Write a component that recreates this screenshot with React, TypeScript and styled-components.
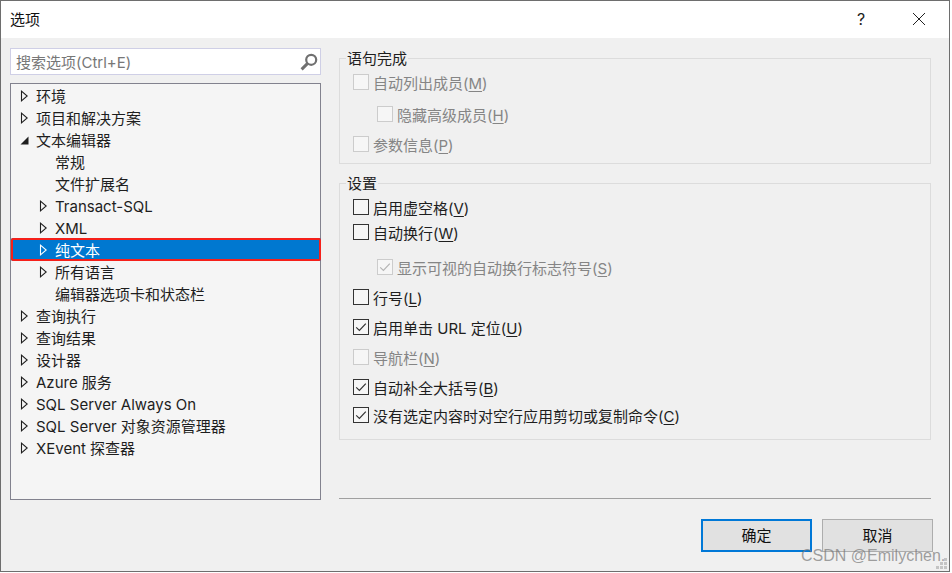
import React from "react";
import styled, { createGlobalStyle } from "styled-components";

const GlobalStyle = createGlobalStyle`
  html, body {
    margin: 0;
    padding: 0;
    background: #fff;
  }
  * {
    box-sizing: border-box;
  }
`;

const Dialog = styled.div`
  width: 950px;
  height: 572px;
  border: 1px solid #6e6e6e;
  background: #f0f0f0;
  display: flex;
  flex-direction: column;
  position: relative;
  overflow: hidden;
  font-family: "Inter", "Noto Sans CJK SC", sans-serif;
  font-size: 15px;
  color: #1e1e1e;
`;

const TitleBar = styled.header`
  height: 37px;
  flex: none;
  background: #fff;
  display: flex;
  align-items: center;
  padding: 0 0 2px 9px;
  color: #111;
`;

const TitleText = styled.span`
  flex: 1;
`;

const TitleButton = styled.div<{ $right: number }>`
  width: 50px;
  margin-right: ${(p) => p.$right}px;
  display: flex;
  align-items: center;
  justify-content: center;
  font-size: 16px;
  color: #222;
`;

const Body = styled.div`
  flex: 1;
  display: flex;
  min-height: 0;
  padding: 10px 17px 0 9px;
  gap: 18px;
`;

const LeftColumn = styled.div`
  width: 311px;
  display: flex;
  flex-direction: column;
  gap: 8px;
`;

const SearchBox = styled.div`
  height: 27px;
  background: #fff;
  border: 1px solid #cfcfe6;
  display: flex;
  align-items: center;
  justify-content: space-between;
  padding: 0 1px 0 5px;
  color: #777;
`;

const Tree = styled.div`
  height: 417px;
  background: #f5f5f5;
  border: 1px solid #82828e;
  padding-top: 1px;
`;

const TreeRow = styled.div<{ $depth: number; $selected?: boolean }>`
  height: ${(p) => (p.$selected ? 23 : 22)}px;
  margin: ${(p) => (p.$selected ? "-1px -1px 0 0" : "0")};
  display: flex;
  align-items: center;
  padding-left: ${(p) => 9 + p.$depth * 19}px;
  padding-top: ${(p) => (p.$selected ? 1 : 0)}px;
  line-height: 22px;
  white-space: nowrap;
  color: ${(p) => (p.$selected ? "#fff" : "#1e1e1e")};
  background: ${(p) => (p.$selected ? "#0078d0" : "transparent")};
  outline: ${(p) => (p.$selected ? "2px solid #f5201a" : "none")};
  outline-offset: -2px;
  border-radius: 2px;
`;

const TreeLabel = styled.span`
  padding-top: 2px;
`;

const ArrowSlot = styled.span`
  width: 16px;
  height: 22px;
  flex: none;
  display: flex;
  align-items: center;
`;

const RightColumn = styled.div`
  width: 592px;
  display: flex;
  flex-direction: column;
`;

const Group = styled.fieldset<{ $height: number; $top: number }>`
  margin: ${(p) => p.$top}px 0 0;
  padding: 0 0 0 13px;
  height: ${(p) => p.$height}px;
  border: 1px solid #dcdcdc;
  min-width: 0;
`;

const GroupTitle = styled.legend`
  padding: 0 1px;
  margin-left: -7px;
  line-height: 20px;
  color: #1e1e1e;
  position: relative;
  top: 1px;
`;

const OptionRow = styled.label<{ $indent?: boolean; $top: number; $disabled?: boolean }>`
  display: flex;
  align-items: center;
  height: 22px;
  gap: 4px;
  margin-top: ${(p) => p.$top}px;
  margin-left: ${(p) => (p.$indent ? 24 : 0)}px;
  color: ${(p) => (p.$disabled ? "#858585" : "#1e1e1e")};
  white-space: nowrap;

  u {
    text-underline-offset: 2px;
  }
`;

const CheckBox = styled.span<{ $disabled?: boolean }>`
  width: 16px;
  height: 16px;
  flex: none;
  border: 1px solid ${(p) => (p.$disabled ? "#cccccc" : "#333333")};
  color: ${(p) => (p.$disabled ? "#b5b5b5" : "#333333")};
  background: #f6f6f6;
  display: flex;
  align-items: center;
  justify-content: center;
`;

const Separator = styled.div`
  height: 1px;
  background: #a0a0a0;
  margin-top: 58px;
`;

const Footer = styled.div`
  display: flex;
  justify-content: flex-end;
  gap: 10px;
  margin-top: 20px;
  margin-right: -2px;
`;

const DialogButton = styled.div<{ $primary?: boolean }>`
  width: 111px;
  height: 33px;
  background: #e1e1e1;
  border: ${(p) => (p.$primary ? "2px solid #0078d7" : "1px solid #adadad")};
  padding-bottom: 2px;
  display: flex;
  align-items: center;
  justify-content: center;
  color: #111;
`;

const Watermark = styled.div`
  position: absolute;
  left: 800px;
  top: 546px;
  font-family: "Liberation Sans", sans-serif;
  font-size: 16px;
  color: rgba(120, 120, 120, 0.7);
  white-space: nowrap;
`;

const Grip = styled.svg`
  position: absolute;
  right: 1px;
  bottom: 1px;
`;

const ArrowIcon = styled.svg`
  display: block;
`;

const Triangle = ({ open, color }: { open?: boolean; color?: string }) =>
  open ? (
    <ArrowIcon width="9" height="9" viewBox="0 0 9 9">
      <path d="M8.5 0.5V8.5H0.5Z" fill="#1e1e1e" />
    </ArrowIcon>
  ) : (
    <ArrowIcon width="8" height="12" viewBox="0 0 8 12">
      <path d="M1.5 1.2V10.8L7.2 6Z" fill="none" stroke={color || "#1e1e1e"} strokeWidth="1.1" />
    </ArrowIcon>
  );

const Check = () => (
  <svg width="14" height="14" viewBox="0 0 14 14">
    <path d="M2.2 7.4L5.4 10.4L11.8 3.6" fill="none" stroke="currentColor" strokeWidth="1.2" />
  </svg>
);

const SearchIcon = () => (
  <svg width="20" height="20" viewBox="0 0 20 20">
    <circle cx="12.2" cy="7.8" r="5" fill="none" stroke="#707070" strokeWidth="2.2" />
    <path d="M8.4 11.6L2.6 17.4" stroke="#707070" strokeWidth="3" />
  </svg>
);

const CloseIcon = () => (
  <svg width="14" height="14" viewBox="0 0 14 14">
    <path d="M1 1L13 13M13 1L1 13" stroke="#222" strokeWidth="1" />
  </svg>
);

type TreeItem = { label: string; depth: number; arrow?: "closed" | "open"; selected?: boolean };

const treeItems: TreeItem[] = [
  { label: "环境", depth: 0, arrow: "closed" },
  { label: "项目和解决方案", depth: 0, arrow: "closed" },
  { label: "文本编辑器", depth: 0, arrow: "open" },
  { label: "常规", depth: 1 },
  { label: "文件扩展名", depth: 1 },
  { label: "Transact-SQL", depth: 1, arrow: "closed" },
  { label: "XML", depth: 1, arrow: "closed" },
  { label: "纯文本", depth: 1, arrow: "closed", selected: true },
  { label: "所有语言", depth: 1, arrow: "closed" },
  { label: "编辑器选项卡和状态栏", depth: 1 },
  { label: "查询执行", depth: 0, arrow: "closed" },
  { label: "查询结果", depth: 0, arrow: "closed" },
  { label: "设计器", depth: 0, arrow: "closed" },
  { label: "Azure 服务", depth: 0, arrow: "closed" },
  { label: "SQL Server Always On", depth: 0, arrow: "closed" },
  { label: "SQL Server 对象资源管理器", depth: 0, arrow: "closed" },
  { label: "XEvent 探查器", depth: 0, arrow: "closed" },
];

type Option = {
  label: string;
  key: string;
  top: number;
  checked?: boolean;
  disabled?: boolean;
  indent?: boolean;
};

const completionOptions: Option[] = [
  { label: "自动列出成员", key: "M", top: 3, disabled: true },
  { label: "隐藏高级成员", key: "H", top: 10, disabled: true, indent: true },
  { label: "参数信息", key: "P", top: 8, disabled: true },
];

const settingOptions: Option[] = [
  { label: "启用虚空格", key: "V", top: 3 },
  { label: "自动换行", key: "W", top: 3 },
  { label: "显示可视的自动换行标志符号", key: "S", top: 13, checked: true, disabled: true, indent: true },
  { label: "行号", key: "L", top: 8 },
  { label: "启用单击 URL 定位", key: "U", top: 8, checked: true },
  { label: "导航栏", key: "N", top: 8, disabled: true },
  { label: "自动补全大括号", key: "B", top: 8, checked: true },
  { label: "没有选定内容时对空行应用剪切或复制命令", key: "C", top: 6, checked: true },
];

const OptionList = ({ options }: { options: Option[] }) => (
  <>
    {options.map((o) => (
      <OptionRow key={o.key} $top={o.top} $indent={o.indent} $disabled={o.disabled}>
        <CheckBox $disabled={o.disabled}>{o.checked && <Check />}</CheckBox>
        <span>
          {o.label}(<u>{o.key}</u>)
        </span>
      </OptionRow>
    ))}
  </>
);

const App = () => (
  <>
    <GlobalStyle />
    <Dialog>
      <TitleBar>
        <TitleText>选项</TitleText>
        <TitleButton $right={8}>?</TitleButton>
        <TitleButton $right={5}>
          <CloseIcon />
        </TitleButton>
      </TitleBar>
      <Body>
        <LeftColumn>
          <SearchBox>
            <span>搜索选项(Ctrl+E)</span>
            <SearchIcon />
          </SearchBox>
          <Tree>
            {treeItems.map((item) => (
              <TreeRow key={item.label} $depth={item.depth} $selected={item.selected}>
                <ArrowSlot>
                  {item.arrow && (
                    <Triangle open={item.arrow === "open"} color={item.selected ? "#fff" : undefined} />
                  )}
                </ArrowSlot>
                <TreeLabel>{item.label}</TreeLabel>
              </TreeRow>
            ))}
          </Tree>
        </LeftColumn>
        <RightColumn>
          <Group $height={116} $top={0}>
            <GroupTitle>语句完成</GroupTitle>
            <OptionList options={completionOptions} />
          </Group>
          <Group $height={267} $top={9}>
            <GroupTitle>设置</GroupTitle>
            <OptionList options={settingOptions} />
          </Group>
          <Separator />
          <Footer>
            <DialogButton $primary>确定</DialogButton>
            <DialogButton>取消</DialogButton>
          </Footer>
        </RightColumn>
      </Body>
      <Watermark>CSDN @Emilychen.</Watermark>
      <Grip width="12" height="12" viewBox="0 0 12 12">
        <path d="M8 0h3v3H8zM4 4h3v3H4zM8 4h3v3H8zM0 8h3v3H0zM4 8h3v3H4zM8 8h3v3H8z" fill="#c4c4c4" />
      </Grip>
    </Dialog>
  </>
);

export default App;
